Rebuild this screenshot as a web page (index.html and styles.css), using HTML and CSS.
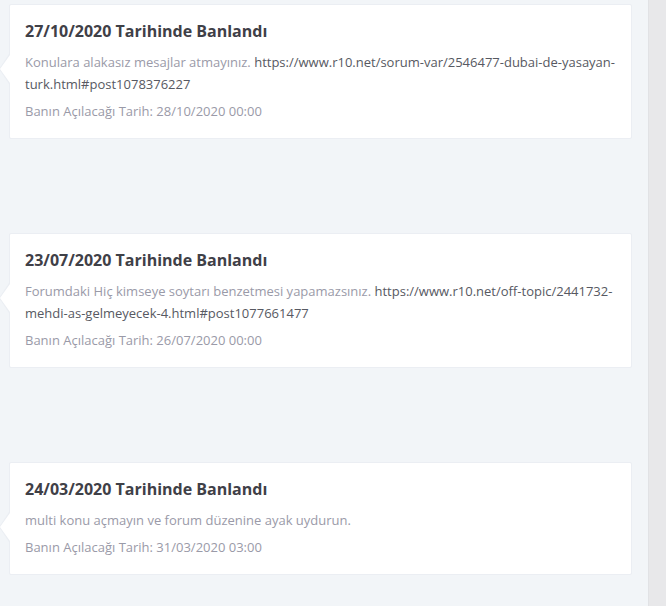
FILE: index.html
```html
<!DOCTYPE html>
<html lang="tr">
<head>
<meta charset="utf-8">
<link rel="stylesheet" href="styles.css">
</head>
<body>
<div class="page">
  <main class="timeline">
    <div class="item">
      <div class="card">
        <h3 class="title">27/10/2020 Tarihinde Banlandı</h3>
        <p class="reason">Konulara alakasız mesajlar atmayınız. <a class="link" href="#">https://www.r10.net/sorum-var/2546477-dubai-de-yasayan-turk.html#post1078376227</a></p>
        <p class="date">Banın Açılacağı Tarih: 28/10/2020 00:00</p>
      </div>
    </div>
    <div class="item">
      <div class="card">
        <h3 class="title">23/07/2020 Tarihinde Banlandı</h3>
        <p class="reason">Forumdaki Hiç kimseye soytarı benzetmesi yapamazsınız. <a class="link" href="#">https://www.r10.net/off-topic/2441732-mehdi-as-gelmeyecek-4.html#post1077661477</a></p>
        <p class="date">Banın Açılacağı Tarih: 26/07/2020 00:00</p>
      </div>
    </div>
    <div class="item">
      <div class="card">
        <h3 class="title">24/03/2020 Tarihinde Banlandı</h3>
        <p class="reason">multi konu açmayın ve forum düzenine ayak uydurun.</p>
        <p class="date">Banın Açılacağı Tarih: 31/03/2020 03:00</p>
      </div>
    </div>
  </main>
  <div class="rail"></div>
</div>
</body>
</html>
```

FILE: styles.css
```css
html, body {
  margin: 0;
  padding: 0;
  height: 100%;
}
body {
  font-family: "Open Sans", "Liberation Sans", sans-serif;
  background: #f2f5f8;
  overflow: hidden;
}
.page {
  display: flex;
  height: 100%;
}
.timeline {
  width: 648px;
  flex: none;
  padding: 4px 16px 0 9px;
  box-sizing: border-box;
}
.rail {
  flex: 1;
  background: #e8e8ea;
  border-left: 1px solid #e1e2e5;
}
.item {
  height: 229px;
}
.item:last-child {
  height: auto;
}
.card {
  position: relative;
  background: #fff;
  border: 1px solid #ebeef3;
  border-radius: 2px;
  padding: 14px 15px 16px 15px;
}
.card::before {
  content: "";
  position: absolute;
  left: -11px;
  top: 49px;
  border-style: solid;
  border-width: 15px 10px 15px 0;
  border-color: transparent #ebeef3 transparent transparent;
}
.card::after {
  content: "";
  position: absolute;
  left: -10px;
  top: 50px;
  border-style: solid;
  border-width: 14px 10px 14px 0;
  border-color: transparent #fff transparent transparent;
}
.title {
  margin: 0 0 8px;
  font-size: 16px;
  line-height: 24px;
  font-weight: 700;
  color: #3f4047;
}
.reason {
  margin: 0 0 5px;
  font-size: 13px;
  line-height: 22px;
  color: #9a9aa8;
}
.link {
  color: #575962;
  text-decoration: none;
}
.date {
  margin: 0;
  font-size: 13px;
  line-height: 22px;
  color: #9a9aa8;
}
```
